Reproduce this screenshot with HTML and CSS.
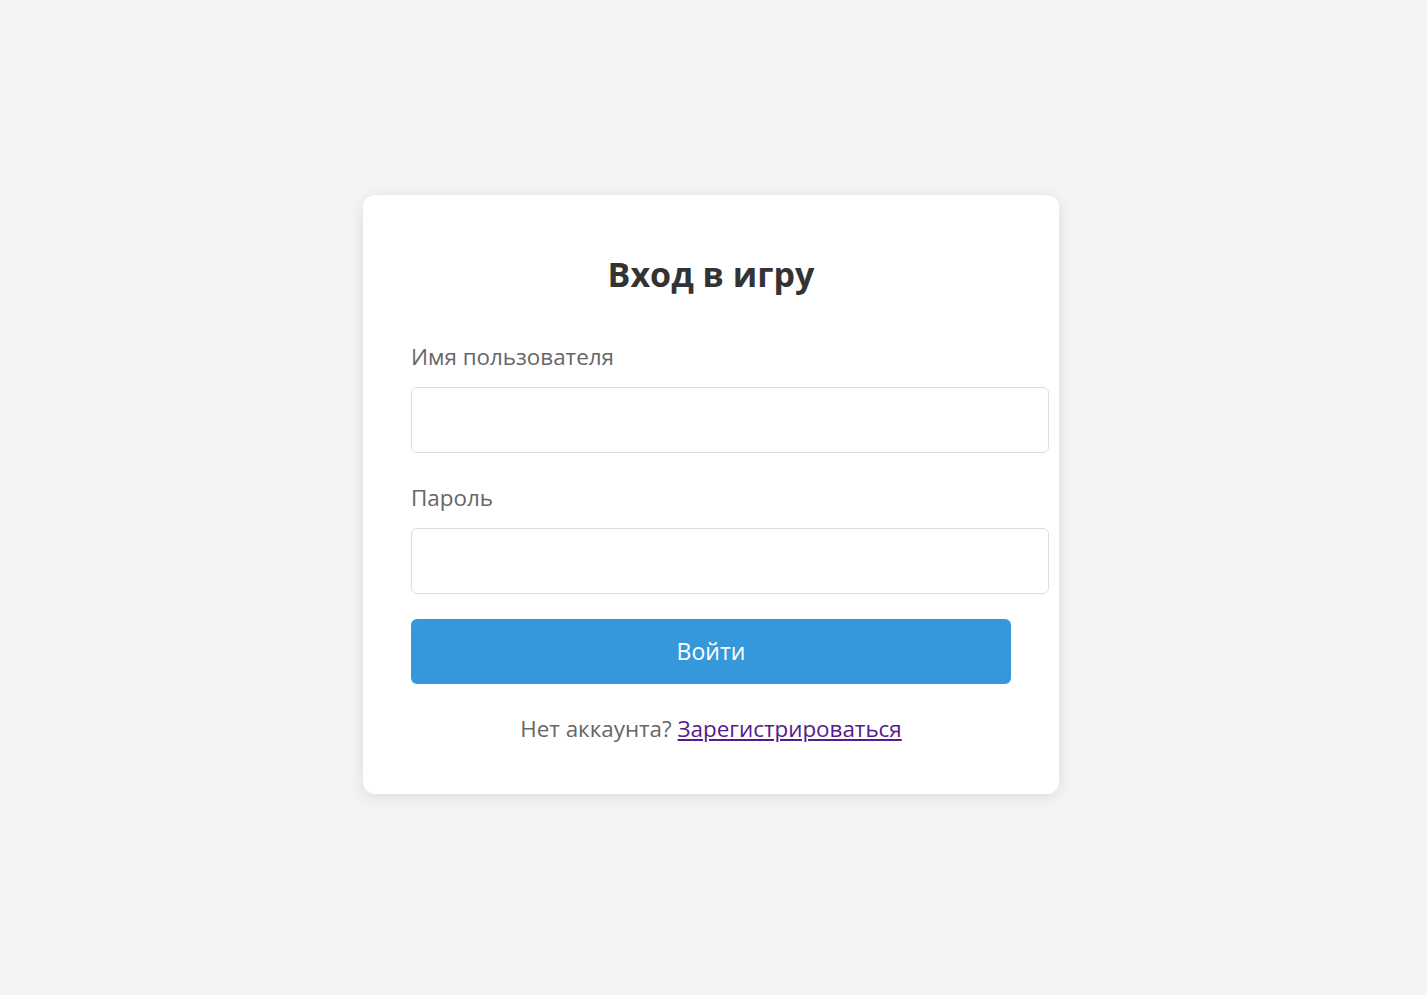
FILE: index.html
```html
<!DOCTYPE html>
<html lang="ru">
<head>
<meta charset="utf-8">
<title>Вход в игру</title>
<link rel="stylesheet" href="styles.css">
</head>
<body>
<div class="card">
  <h2 class="title">Вход в игру</h2>
  <form class="form">
    <div class="group">
      <label class="label" for="username">Имя пользователя</label>
      <input class="input" id="username" type="text">
    </div>
    <div class="group group-last">
      <label class="label" for="password">Пароль</label>
      <input class="input" id="password" type="password">
    </div>
    <button class="btn" type="button">Войти</button>
  </form>
  <p class="footer">Нет аккаунта? <a class="link" href="#">Зарегистрироваться</a></p>
</div>
</body>
</html>
```
FILE: styles.css
```css
html, body {
  margin: 0;
  height: 100%;
}
body {
  background: #f4f4f4;
  font-family: "Open Sans", "Noto Sans", "Liberation Sans", sans-serif;
  display: flex;
  align-items: center;
  justify-content: center;
  padding: 0 5px 7px 0;
  box-sizing: border-box;
}
.card {
  width: 600px;
  padding: 56px 48px 49px;
  background: #fff;
  border-radius: 12px;
  box-shadow: 0 3px 15px rgba(0, 0, 0, 0.1);
}
.title {
  margin: 0 0 44px;
  text-align: center;
  font-size: 34px;
  line-height: 46px;
  font-weight: 700;
  color: #333;
}
.form {
  margin: 0;
}
.group {
  margin-bottom: 29px;
}
.group-last {
  margin-bottom: 25px;
}
.label {
  display: block;
  margin-bottom: 14px;
  font-size: 22.4px;
  line-height: 32px;
  color: #666;
}
.input {
  display: block;
  width: 100%;
  height: 28px;
  padding: 18px;
  border: 1.5px solid #ddd;
  border-radius: 6px;
  background: #fff;
  font: inherit;
  font-size: 22px;
  margin: 0;
}
.btn {
  display: block;
  width: 100%;
  height: 65px;
  margin: 0;
  border: none;
  border-radius: 6px;
  background: #3498db;
  color: #fff;
  font-family: inherit;
  font-size: 23px;
  cursor: pointer;
}
.footer {
  margin: 29px 0 0;
  text-align: center;
  font-size: 22.4px;
  line-height: 32px;
  color: #666;
}
.link {
  color: #551a8b;
}
```
